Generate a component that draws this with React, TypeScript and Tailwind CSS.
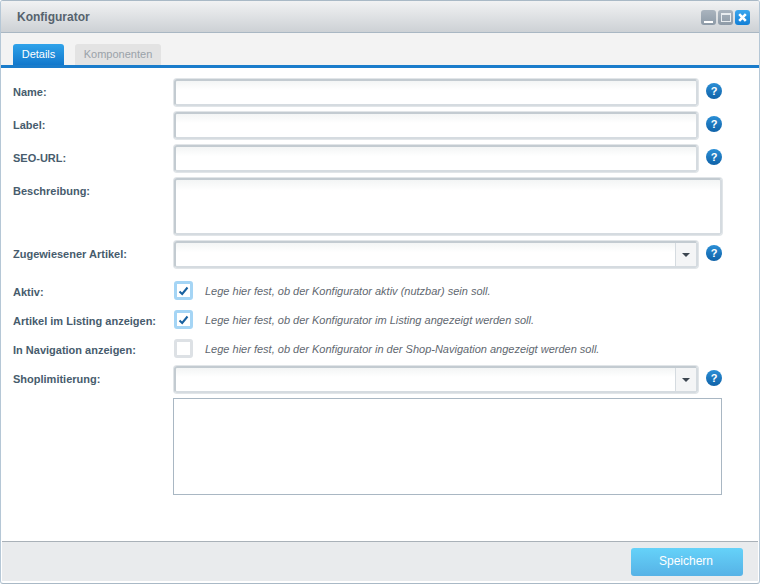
const font = "font-['Liberation_Sans',Arial,sans-serif]";

function Help() {
  return (
    <span className="flex h-4 w-4 shrink-0 items-center justify-center rounded-full bg-gradient-to-b from-[#2b8fd6] to-[#0f62a8] text-[11px] font-bold leading-none text-white">
      ?
    </span>
  );
}

function Label({ children, top = "pt-[6px]" }: { children: string; top?: string }) {
  return (
    <div className={`w-[173px] shrink-0 pl-[12px] text-[11px] font-bold leading-[14px] text-[#475c6d] ${top}`}>
      {children}
    </div>
  );
}

function TextRow({ label, className = "" }: { label: string; className?: string }) {
  return (
    <div className={`flex h-[27px] items-start ${className}`}>
      <Label>{label}</Label>
      <div className="h-[27px] w-[524px] rounded-[3px] border-[2px] border-[#d5dbe0] border-t-[#c3cbd1] border-l-[#c3cbd1] bg-gradient-to-b from-[#f3f5f5] to-white to-40% ring-1 ring-[#e1e5e8]" />
      <div className="ml-[8px] pt-[4px]">
        <Help />
      </div>
    </div>
  );
}

function ComboRow({ label, className = "" }: { label: string; className?: string }) {
  return (
    <div className={`flex h-[27px] items-start ${className}`}>
      <Label>{label}</Label>
      <div className="flex h-[27px] w-[524px] justify-end rounded-[3px] border-[2px] border-[#d5dbe0] border-t-[#c3cbd1] border-l-[#c3cbd1] bg-gradient-to-b from-[#f3f5f5] to-white to-40% ring-1 ring-[#e1e5e8]">
        <div className="flex w-[21px] items-center justify-center border-l border-[#d5dbe0] bg-[#f4f5f6]">
          <span className="h-0 w-0 border-x-[4px] border-t-[4px] border-x-transparent border-t-[#3c4650]" />
        </div>
      </div>
      <div className="ml-[8px] pt-[4px]">
        <Help />
      </div>
    </div>
  );
}

function CheckRow({ label, text, checked, className = "" }: { label: string; text: string; checked?: boolean; className?: string }) {
  return (
    <div className={`flex h-[19px] items-center ${className}`}>
      <Label top="pt-[2px]">{label}</Label>
      <div
        className={`flex h-[19px] w-[19px] items-center justify-center rounded-[3px] border-[3px] bg-white ${
          checked ? "border-[#a5d5f5]" : "border-[#dde1e5]"
        }`}
      >
        {checked && (
          <svg width="11" height="10" viewBox="0 0 11 10">
            <path d="M1.5 5.5 L4.2 8 L9.5 1.5" fill="none" stroke="#17609f" strokeWidth="2" />
          </svg>
        )}
      </div>
      <span className="ml-[12px] pt-[2px] text-[11px] italic text-[#5f6870]">{text}</span>
    </div>
  );
}

export default function App() {
  return (
    <div className={`flex h-[584px] w-[760px] flex-col overflow-hidden rounded-[3px] border border-x-[#b5c7d6] border-t-[#a9b9c6] border-b-[#a9b9c6] bg-white ${font}`}>
      <div className="flex h-[32px] shrink-0 items-center justify-between border-b border-[#a9b7c3] bg-gradient-to-b from-[#f1f2f3] to-[#cdd1d5] pl-[16px] pr-[9px]">
        <span className="text-[12px] font-bold text-[#56636e]">Konfigurator</span>
        <div className="flex gap-[2px] pt-[1px]">
          <span className="flex h-[15px] w-[15px] items-end justify-center rounded-[3px] bg-gradient-to-b from-[#aab4be] to-[#8d9aa7] pb-[2px]">
            <span className="h-[2px] w-[9px] bg-white" />
          </span>
          <span className="flex h-[15px] w-[15px] items-center justify-center rounded-[3px] bg-gradient-to-b from-[#aab4be] to-[#8d9aa7]">
            <span className="h-[9px] w-[10px] border border-t-2 border-[#e8ecef]" />
          </span>
          <span className="flex h-[15px] w-[15px] items-center justify-center rounded-[3px] bg-gradient-to-b from-[#3aa6ee] to-[#107fd6]">
            <svg width="9" height="9" viewBox="0 0 9 9">
              <path d="M1.2 1.2 L7.8 7.8 M7.8 1.2 L1.2 7.8" stroke="#fff" strokeWidth="2.6" />
            </svg>
          </span>
        </div>
      </div>

      <div className="flex h-[35px] shrink-0 items-end gap-[11px] border-b-[3px] border-[#1a7ccb] bg-[#f3f3f3] pl-[12px]">
        <div className="flex h-[21px] w-[51px] items-center justify-center rounded-t-[3px] bg-gradient-to-b from-[#2fa3ea] to-[#1278cc] text-[11px] text-white">
          Details
        </div>
        <div className="flex h-[21px] w-[86px] items-center justify-center rounded-t-[3px] bg-[#e3e3e3] text-[11px] text-[#9aa2a9]">
          Komponenten
        </div>
      </div>

      <div className="flex-1 pt-[11px]">
        <TextRow label="Name:" />
        <TextRow label="Label:" className="mt-[6px]" />
        <TextRow label="SEO-URL:" className="mt-[6px]" />
        <div className="mt-[6px] flex h-[57px] items-start">
          <Label>Beschreibung:</Label>
          <div className="h-[57px] w-[548px] rounded-[3px] border-[2px] border-[#d5dbe0] border-t-[#c3cbd1] border-l-[#c3cbd1] bg-gradient-to-b from-[#f3f5f5] to-white to-20% ring-1 ring-[#e1e5e8]" />
        </div>
        <ComboRow label="Zugewiesener Artikel:" className="mt-[6px]" />
        <CheckRow className="mt-[13px]" label="Aktiv:" checked text="Lege hier fest, ob der Konfigurator aktiv (nutzbar) sein soll." />
        <CheckRow className="mt-[10px]" label="Artikel im Listing anzeigen:" checked text="Lege hier fest, ob der Konfigurator im Listing angezeigt werden soll." />
        <CheckRow className="mt-[10px]" label="In Navigation anzeigen:" text="Lege hier fest, ob der Konfigurator in der Shop-Navigation angezeigt werden soll." />
        <ComboRow label="Shoplimitierung:" className="mt-[8px]" />
        <div className="mt-[5px] ml-[172px] h-[97px] w-[549px] border border-[#a9b7c3] bg-white" />
      </div>

      <div className="mx-[1px] mb-[2px] flex h-[40px] shrink-0 items-center justify-end border-t border-[#a9b1b8] bg-[#e9ebed] pr-[15px]">
        <button className="h-[28px] w-[112px] rounded-[3px] bg-gradient-to-b from-[#65d2f9] to-[#56b2e6] pr-[2px] pb-[2px] text-[12px] text-white">
          Speichern
        </button>
      </div>
    </div>
  );
}
